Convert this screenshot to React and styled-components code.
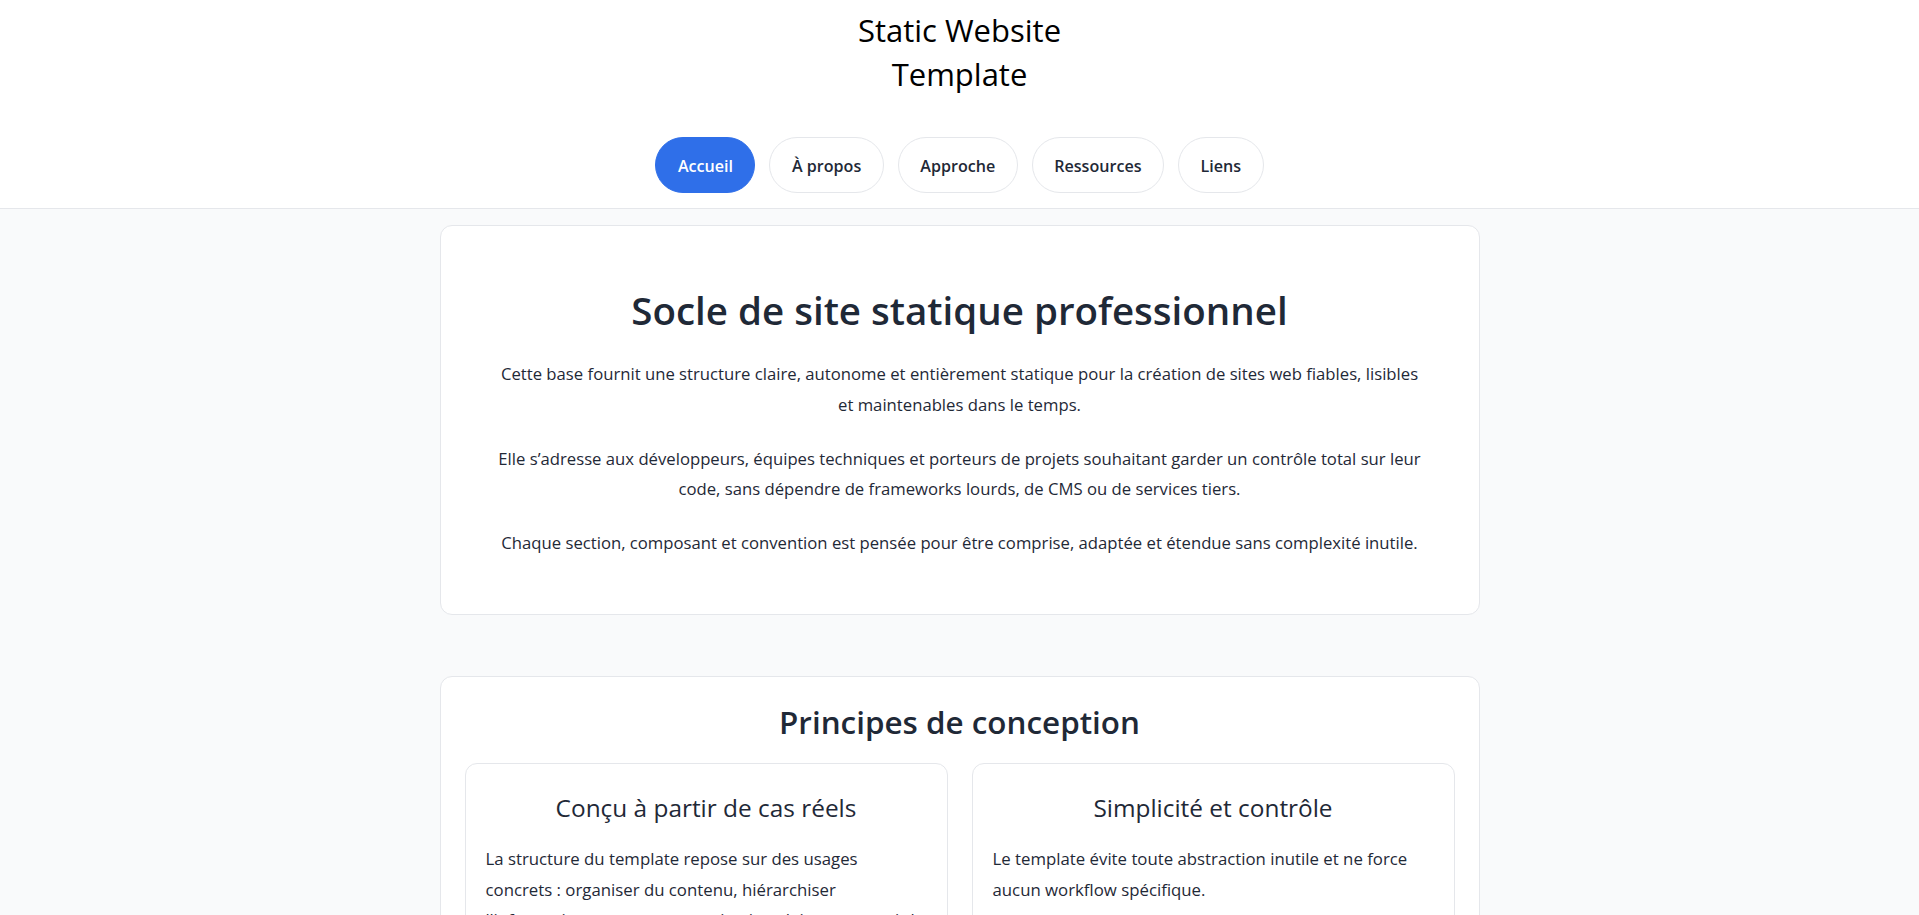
import React from 'react'
import styled, { createGlobalStyle } from 'styled-components'

const GlobalStyle = createGlobalStyle`
  * { box-sizing: border-box; }
  body {
    margin: 0;
    background: #f9fafb;
    color: #1f2937;
    font-family: "Open Sans", "Noto Sans", sans-serif;
  }
`;

const Header = styled.header`
  background: #fff;
  border-bottom: 1px solid #e5e7eb;
  padding: 8px 16px 15px;
  text-align: center;
`;

const SiteTitle = styled.h1`
  margin: 0 auto 41px;
  max-width: 260px;
  font-size: 31px;
  font-weight: 400;
  line-height: 44px;
  color: #000;
`;

const Nav = styled.nav`
  display: flex;
  justify-content: center;
  gap: 14px;
`;

const NavLink = styled.a`
  display: inline-flex;
  align-items: center;
  height: 56px;
  padding: 2px 21.5px 0;
  border-radius: 999px;
  border: 1px solid ${(p) => (p.$active ? '#2f6fe9' : '#e5e7eb')};
  background: ${(p) => (p.$active ? '#2f6fe9' : '#fff')};
  color: ${(p) => (p.$active ? '#fff' : '#1f2937')};
  font-size: 16.1px;
  font-weight: 600;
  text-decoration: none;
  cursor: pointer;
`;

const Main = styled.main`
  max-width: 1040px;
  margin: 16px auto 0;
  padding-bottom: 60px;
  display: flex;
  flex-direction: column;
  gap: 61px;
`;

const Card = styled.section`
  background: #fff;
  border: 1px solid #e5e7eb;
  border-radius: 12px;
`;

const Hero = styled(Card)`
  padding: 60px 53px 55px;
  text-align: center;
`;

const HeroTitle = styled.h2`
  margin: 0 0 25px;
  font-size: 38.5px;
  font-weight: 600;
  line-height: 48px;
  color: #1f2937;
`;

const HeroText = styled.p`
  margin: 0 0 23.5px;
  font-size: 16.7px;
  line-height: 30.6px;
  &:last-child { margin-bottom: 0; }
`;

const Section = styled(Card)`
  padding: 23px 24px 24px;
`;

const SectionTitle = styled.h2`
  margin: 0 0 19px;
  text-align: center;
  font-size: 31.4px;
  font-weight: 600;
  line-height: 44px;
  color: #1f2937;
`;

const Grid = styled.div`
  display: grid;
  grid-template-columns: 1fr 1fr;
  gap: 24px;
`;

const Feature = styled.article`
  border: 1px solid #e5e7eb;
  border-radius: 12px;
  padding: 28px 20px 20px;
`;

const FeatureTitle = styled.h3`
  margin: 0 0 20px;
  text-align: center;
  font-size: 24.4px;
  font-weight: 400;
  line-height: 32px;
`;

const FeatureText = styled.p`
  margin: 0 0 20px;
  font-size: 16.8px;
  line-height: 30.6px;
  &:last-child { margin-bottom: 0; }
`;

const links = ['Accueil', 'À propos', 'Approche', 'Ressources', 'Liens'];

const features = [
  {
    title: 'Conçu à partir de cas réels',
    text: [
      "La structure du template repose sur des usages concrets : organiser du contenu, hiérarchiser l'information, assurer une navigation claire et garantir la cohérence visuelle entre les pages.",
    ],
  },
  {
    title: 'Simplicité et contrôle',
    text: [
      'Le template évite toute abstraction inutile et ne force aucun workflow spécifique.',
      'Chaque fichier reste lisible et modifiable directement, sans outil de compilation obligatoire.',
    ],
  },
];

export default function App() {
  return (
    <>
      <GlobalStyle />
      <Header>
        <SiteTitle>Static Website Template</SiteTitle>
        <Nav>
          {links.map((l, i) => (
            <NavLink key={l} $active={i === 0}>{l}</NavLink>
          ))}
        </Nav>
      </Header>
      <Main>
        <Hero>
          <HeroTitle>Socle de site statique professionnel</HeroTitle>
          <HeroText>
            Cette base fournit une structure claire, autonome et entièrement statique pour la création de sites web fiables, lisibles et maintenables dans le temps.
          </HeroText>
          <HeroText>
            Elle s’adresse aux développeurs, équipes techniques et porteurs de projets souhaitant garder un contrôle total sur leur code, sans dépendre de frameworks lourds, de CMS ou de services tiers.
          </HeroText>
          <HeroText>
            Chaque section, composant et convention est pensée pour être comprise, adaptée et étendue sans complexité inutile.
          </HeroText>
        </Hero>
        <Section>
          <SectionTitle>Principes de conception</SectionTitle>
          <Grid>
            {features.map((f) => (
              <Feature key={f.title}>
                <FeatureTitle>{f.title}</FeatureTitle>
                {f.text.map((t) => (
                  <FeatureText key={t}>{t}</FeatureText>
                ))}
              </Feature>
            ))}
          </Grid>
        </Section>
      </Main>
    </>
  )
}
